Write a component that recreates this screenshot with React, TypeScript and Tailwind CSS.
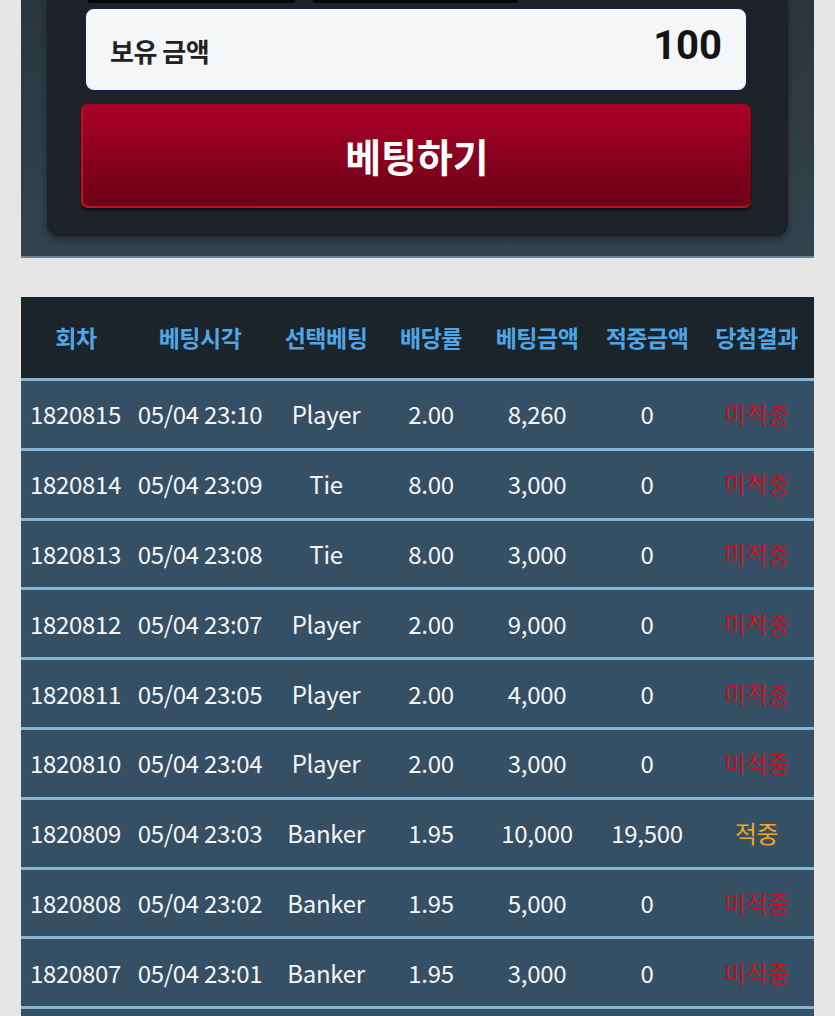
import React from "react";

const rows = [
  ["1820815", "05/04 23:10", "Player", "2.00", "8,260", "0", "미적중"],
  ["1820814", "05/04 23:09", "Tie", "8.00", "3,000", "0", "미적중"],
  ["1820813", "05/04 23:08", "Tie", "8.00", "3,000", "0", "미적중"],
  ["1820812", "05/04 23:07", "Player", "2.00", "9,000", "0", "미적중"],
  ["1820811", "05/04 23:05", "Player", "2.00", "4,000", "0", "미적중"],
  ["1820810", "05/04 23:04", "Player", "2.00", "3,000", "0", "미적중"],
  ["1820809", "05/04 23:03", "Banker", "1.95", "10,000", "19,500", "적중"],
  ["1820808", "05/04 23:02", "Banker", "1.95", "5,000", "0", "미적중"],
  ["1820807", "05/04 23:01", "Banker", "1.95", "3,000", "0", "미적중"],
];

const headers = ["회차", "베팅시각", "선택베팅", "배당률", "베팅금액", "적중금액", "당첨결과"];
const widths = ["w-[110px]", "w-[138px]", "w-[114px]", "w-[96px]", "w-[116px]", "w-[104px]", "flex-1"];

export default function App() {
  return (
    <div
      className="min-h-screen bg-[#e6e6e6] overflow-hidden"
      style={{ fontFamily: '"Noto Sans CJK KR", "Noto Sans", sans-serif' }}
    >
      {/* top panel */}
      <div className="mx-[21px] bg-gradient-to-b from-[#29353d] to-[#34434e] border-b-2 border-[#70848f] px-[26px] pb-[20px]">
        <div className="bg-[#1c2227] rounded-b-[12px] shadow-[0_4px_6px_rgba(0,0,0,0.35)] pl-[34px] pr-[37px] pb-[28px]">
          <div className="flex h-[3px] pl-[7px] gap-[18px]">
            <div className="w-[207px] h-[3px] bg-[#050708] rounded-b-[3px]" />
            <div className="w-[205px] h-[3px] bg-[#050708] rounded-b-[3px]" />
          </div>
          <div className="mt-[5px] mx-[4px] h-[83px] rounded-[9px] bg-[#f5f6f8] border border-[#16214a] flex items-center justify-between pl-[24px] pr-[24px]">
            <span className="text-[26px] font-bold text-[#222] mt-[2px] tracking-[-0.5px]">보유 금액</span>
            <span
              className="text-[40px] font-bold text-[#141414] leading-none -mt-[8px]"
              style={{ fontFamily: "Roboto, sans-serif" }}
            >
              100
            </span>
          </div>
          <div className="mt-[13px] h-[104px] rounded-[7px] bg-gradient-to-b from-[#ab0028] to-[#6c0016] border-l-2 border-b-2 border-[#c2101e] shadow-[0_2px_3px_rgba(0,0,0,0.6)] flex items-center justify-center">
            <span className="text-[39px] font-bold text-white">베팅하기</span>
          </div>
        </div>
      </div>

      {/* table */}
      <div className="mx-[21px] mt-[39px]">
        <div className="flex h-[84px] bg-[#1b242b] border-b-[3px] border-[#86b6d6] items-center">
          {headers.map((h, i) => (
            <div key={h} className={`${widths[i]} text-center text-[23px] font-bold text-[#4ea6e6] tracking-[-0.5px]`}>
              {h}
            </div>
          ))}
        </div>
        {rows.map((r) => (
          <div
            key={r[0]}
            className="flex h-[66.8px] box-content bg-[#355065] border-b-[3px] border-[#86b6d6] items-center"
          >
            {r.map((c, i) => (
              <div
                key={i}
                className={`${widths[i]} text-center text-[24px] tracking-[-0.3px] ${
                  i === 6 ? (c === "적중" ? "text-[#f0a61e]" : "text-[#c8101c]") : "text-[#f4f6f8]"
                } ${i === 0 ? "text-left pl-[9px]" : ""}`}
              >
                {c}
              </div>
            ))}
          </div>
        ))}
        <div className="h-[40px] bg-[#355065]" />
      </div>
    </div>
  );
}
